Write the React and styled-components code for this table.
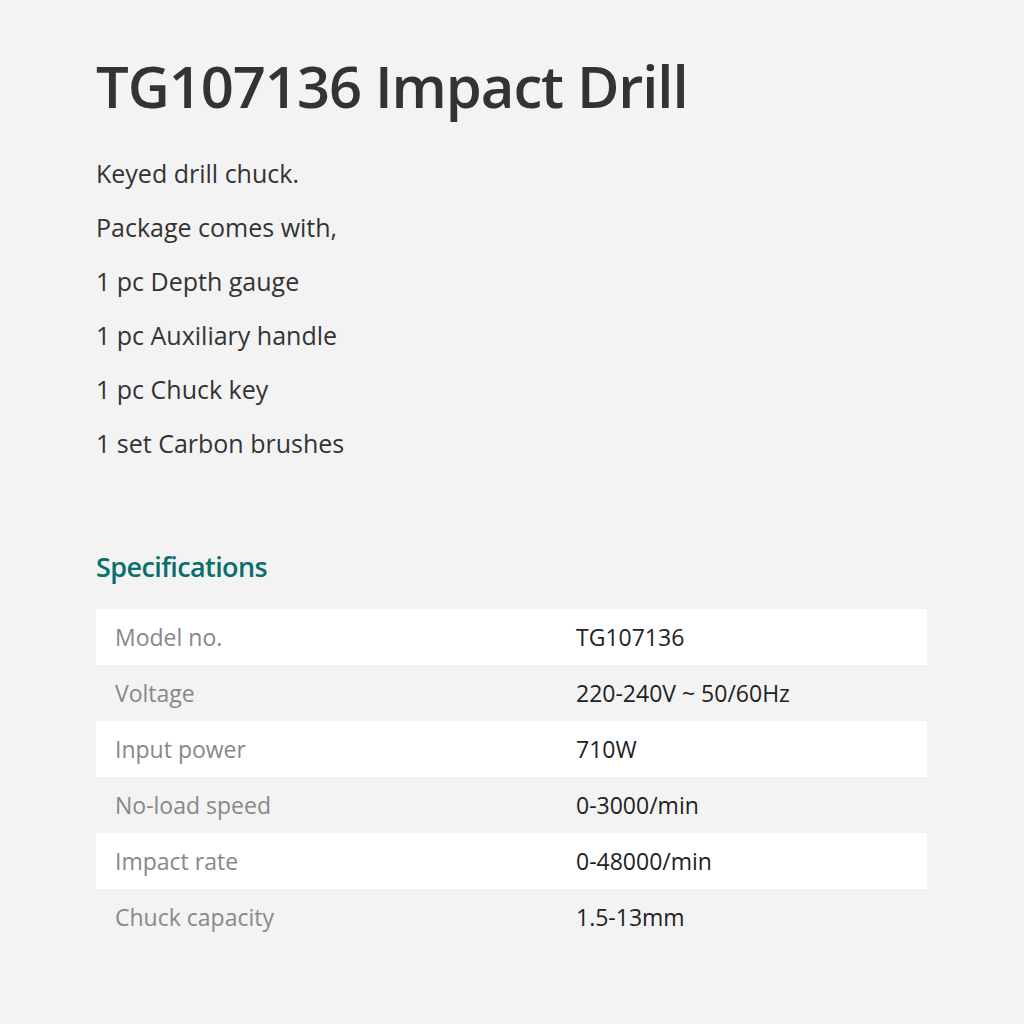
import React from 'react';
import styled, { createGlobalStyle } from 'styled-components';

const GlobalStyle = createGlobalStyle`
  html, body {
    margin: 0;
    padding: 0;
    background: #f3f3f3;
  }
  body {
    font-family: 'Open Sans', 'Liberation Sans', sans-serif;
    color: #333;
  }
`;

const Page = styled.main`
  width: 1024px;
  min-height: 1024px;
  box-sizing: border-box;
  padding: 51px 97px 0 96px;
`;

const Title = styled.h1`
  margin: 0;
  font-family: 'Open Sans', sans-serif;
  font-size: 58px;
  font-weight: 600;
  line-height: 70px;
  letter-spacing: -1.1px;
  color: #333;
`;

const Description = styled.div`
  margin-top: 25px;
  display: flex;
  flex-direction: column;
`;

const Line = styled.p`
  margin: 0;
  font-size: 25px;
  line-height: 54px;
  color: #333;
`;

const SpecHeading = styled.h2`
  margin: 77px 0 0;
  font-size: 27px;
  font-weight: 600;
  line-height: 40px;
  letter-spacing: -0.6px;
  color: #0b6e6e;
`;

const SpecTable = styled.div`
  margin-top: 22px;
  display: flex;
  flex-direction: column;
`;

const Row = styled.div`
  display: grid;
  grid-template-columns: 480px 1fr;
  height: 56px;
  align-items: center;
  background: ${(p) => (p.$shaded ? '#ffffff' : 'transparent')};
`;

const Label = styled.span`
  padding-left: 19px;
  font-size: 23px;
  color: #888;
`;

const Value = styled.span`
  font-size: 23px;
  color: #222;
`;

const lines = [
  'Keyed drill chuck.',
  'Package comes with,',
  '1 pc Depth gauge',
  '1 pc Auxiliary handle',
  '1 pc Chuck key',
  '1 set Carbon brushes',
];

const specs = [
  ['Model no.', 'TG107136'],
  ['Voltage', '220-240V ~ 50/60Hz'],
  ['Input power', '710W'],
  ['No-load speed', '0-3000/min'],
  ['Impact rate', '0-48000/min'],
  ['Chuck capacity', '1.5-13mm'],
];

export default function App() {
  return (
    <>
      <GlobalStyle />
      <Page>
        <Title>TG107136 Impact Drill</Title>
        <Description>
          {lines.map((l) => (
            <Line key={l}>{l}</Line>
          ))}
        </Description>
        <SpecHeading>Specifications</SpecHeading>
        <SpecTable>
          {specs.map(([k, v], i) => (
            <Row key={k} $shaded={i % 2 === 0}>
              <Label>{k}</Label>
              <Value>{v}</Value>
            </Row>
          ))}
        </SpecTable>
      </Page>
    </>
  );
}
